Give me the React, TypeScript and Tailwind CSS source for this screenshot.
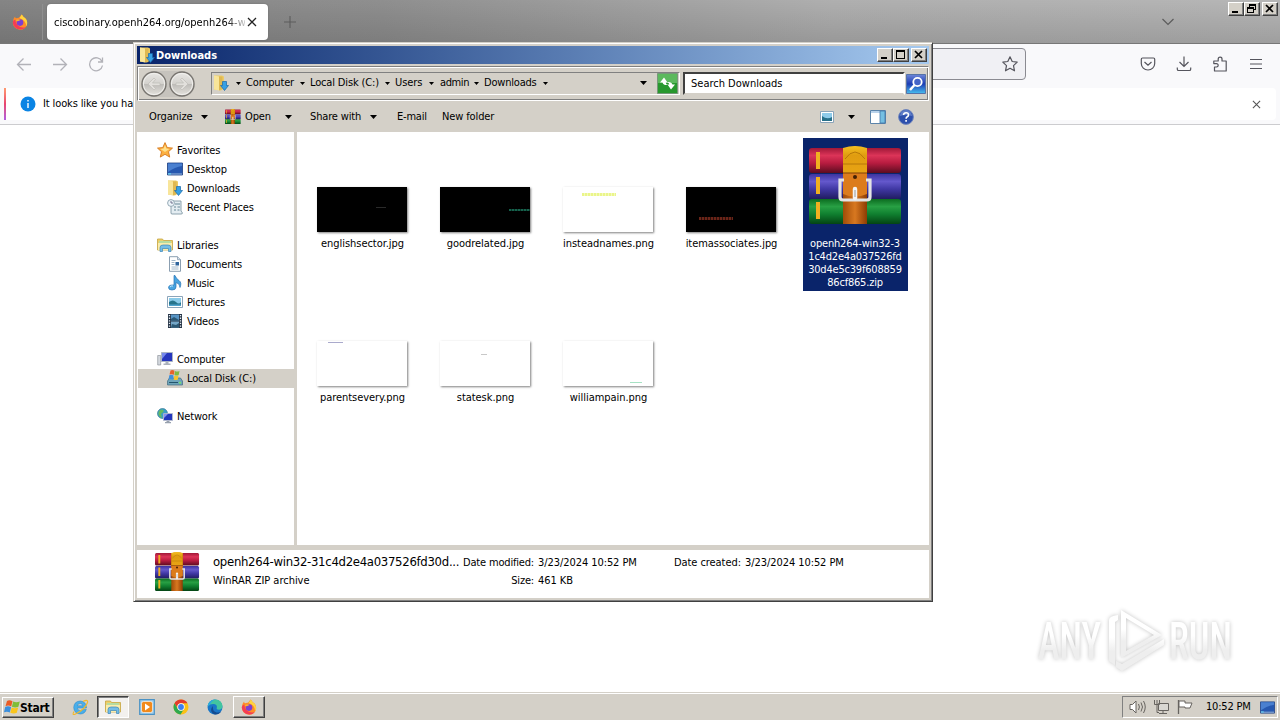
import type { ReactNode } from "react";

type IconProps = { className?: string };

function RarIcon({ className }: IconProps) {
  return (
    <svg viewBox="0 0 94 78" preserveAspectRatio="none" className={className}>
      <defs>
        <linearGradient id="rarRed" x1="0" y1="0" x2="0" y2="1">
          <stop offset="0" stopColor="#a01838" />
          <stop offset="0.3" stopColor="#dc3458" />
          <stop offset="0.6" stopColor="#b81c40" />
          <stop offset="1" stopColor="#5c0c20" />
        </linearGradient>
        <linearGradient id="rarBlue" x1="0" y1="0" x2="0" y2="1">
          <stop offset="0" stopColor="#3c34a0" />
          <stop offset="0.3" stopColor="#6458cc" />
          <stop offset="0.6" stopColor="#4038a4" />
          <stop offset="1" stopColor="#201c60" />
        </linearGradient>
        <linearGradient id="rarGreen" x1="0" y1="0" x2="0" y2="1">
          <stop offset="0" stopColor="#0c6c20" />
          <stop offset="0.3" stopColor="#28a044" />
          <stop offset="0.6" stopColor="#108030" />
          <stop offset="1" stopColor="#044414" />
        </linearGradient>
        <linearGradient id="rarGold" x1="0" y1="0" x2="0" y2="1">
          <stop offset="0" stopColor="#f4c020" />
          <stop offset="0.35" stopColor="#e09c10" />
          <stop offset="1" stopColor="#e8a414" />
        </linearGradient>
        <linearGradient id="rarStrap" x1="0" y1="0" x2="1" y2="0">
          <stop offset="0" stopColor="#a04c08" />
          <stop offset="0.5" stopColor="#d87820" />
          <stop offset="1" stopColor="#8c3c04" />
        </linearGradient>
      </defs>
      <rect x="0" y="2" width="92" height="25" rx="3" fill="url(#rarRed)" />
      <rect x="0" y="28" width="92" height="25" rx="3" fill="url(#rarBlue)" />
      <rect x="0" y="53" width="92" height="25" rx="3" fill="url(#rarGreen)" />
      <path d="M7 6h4v17H7zM7 31h4v17H7zM7 56h4v17H7z" fill="#f0b020" />
      <path d="M34 3q12-5 24 0v75H34z" fill="url(#rarStrap)" />
      <path d="M34 2q12-4 24 0v25H34z" fill="url(#rarGold)" />
      <path d="M36 13q10-14 20 0M34 18h24" fill="none" stroke="#b87808" />
      <path d="M34 27h24v21q-12 5-24 0z" fill="#dc7c1c" />
      <path d="M34 27h24" stroke="#804008" />
      <circle cx="46" cy="31" r="2" fill="#442004" />
      <path d="M35 34h-4v17q0 3 3 3h24q3 0 3-3V34h-4" fill="none" stroke="#e4e4e4" strokeWidth="3.200" />
      <path d="M46 43v9" stroke="#f4f4f4" strokeWidth="4.500" strokeLinecap="round" />
      <path d="M46 44v7" stroke="#999" strokeWidth="1" />
    </svg>
  );
}

function DownloadsIcon({ className }: IconProps) {
  return (
    <svg viewBox="0 0 16 16" className={className}>
      <path d="M1 .5h8l2 1v12l-3 2-7-1z" fill="#eccb66" />
      <path d="M1 .5l5 1v14l-5-1z" fill="#f8e59a" />
      <path d="M6 1.500h3.500v12.500l-3.500 1.500z" fill="#dfb851" />
      <path d="M9.500 6.500h4v4h2l-4 5-4-5h2z" fill="#36a0e4" stroke="#1767a9" strokeWidth=".7" />
    </svg>
  );
}

function LibrariesIcon({ className }: IconProps) {
  return (
    <svg viewBox="0 0 16 16" className={className}>
      <path d="M.5 2h5l1 1.500h9v9.500H.5z" fill="#edcf6b" stroke="#c5a440" strokeWidth=".8" />
      <path d="M2 4h12v2H2z" fill="#b7dca0" />
      <path d="M1 6h14v7H1z" fill="#faecac" />
      <path d="M3 14.500v-4q0-2.500 3-2.500h5q3 0 3 2.500v4h-2.500v-3h-6v3z" fill="#74bce6" stroke="#3c86b8" strokeWidth=".7" />
    </svg>
  );
}

function StarIcon({ className }: IconProps) {
  return (
    <svg viewBox="0 0 16 16" className={className}>
      <path d="M8 .6l2.200 5 5.300.5-4 3.600 1.200 5.400L8 12.300l-4.700 2.800 1.200-5.400-4-3.600 5.300-.5z" fill="#fcb040" stroke="#d6781c" strokeWidth=".9" />
      <path d="M8 3l1.400 3.600 3 .4-4.400 3-4.500-3 3.100-.4z" fill="#ffe08a" />
    </svg>
  );
}

function DesktopIcon({ className }: IconProps) {
  return (
    <svg viewBox="0 0 16 16" className={className}>
      <path d="M.5 2h15v12H.5z" fill="#2658b0" stroke="#1c3f80" strokeWidth=".8" />
      <path d="M1 2.500h14V5Q8 6 1 11z" fill="#4a80d0" />
      <path d="M1 12.500h14v1H1z" fill="#9db9dc" />
      <path d="M1 12h3v1.500H1z" fill="#5fc2e8" />
    </svg>
  );
}

function RecentIcon({ className }: IconProps) {
  return (
    <svg viewBox="0 0 16 16" className={className}>
      <path d="M4 2h10v10l1.500 2q0 1-1.500 1H5q-1.500 0-1-2z" fill="#e4edf2" stroke="#8299a5" strokeWidth=".9" />
      <path d="M8 5h5M7 8h2M10.500 8H13M7 11h2M10.500 11h2" stroke="#678797" />
      <circle cx="4" cy="4" r="3.400" fill="#edf5fa" stroke="#8aa0ad" strokeWidth=".9" />
      <path d="M4 2v2h2" fill="none" stroke="#557" strokeWidth=".8" />
    </svg>
  );
}

function DocumentIcon({ className }: IconProps) {
  return (
    <svg viewBox="0 0 16 16" className={className}>
      <path d="M2.500.7h8l3 3v11.600h-11z" fill="#fff" stroke="#7e94a8" strokeWidth=".9" />
      <path d="M10.500.7v3h3" fill="#d5e0ea" stroke="#7e94a8" strokeWidth=".7" />
      <path d="M4.500 4.500h4M4.500 6.500h3M4.500 8.500h3M4.500 11h7M4.500 13h7" stroke="#8aa4bd" strokeWidth=".8" />
      <path d="M8.500 6h3.500v3.500H8.500z" fill="#2e639c" />
    </svg>
  );
}

function MusicIcon({ className }: IconProps) {
  return (
    <svg viewBox="0 0 16 16" className={className}>
      <path d="M8 .5q1 3 4 5t1 7q0-4-4-5v4.500q0 3-4 3-3.500 0-3.500-2.500T6 10h1V.5z" fill="#48a4e0" stroke="#2673b4" strokeWidth=".7" />
      <path d="M3 12q1-1.500 3-1" stroke="#c1e8fb" fill="none" />
    </svg>
  );
}

function PictureIcon({ className }: IconProps) {
  return (
    <svg viewBox="0 0 16 16" className={className}>
      <path d="M.5 2.500h15v11H.5z" fill="#fff" stroke="#7f9bb2" strokeWidth=".9" />
      <path d="M2 4h12v8H2z" fill="#8bcbe9" />
      <path d="M2 8q4-3 7 0t5 0v4H2z" fill="#27748b" />
      <path d="M2 10.500h12V12H2z" fill="#4fa3cd" />
    </svg>
  );
}

function VideoIcon({ className }: IconProps) {
  return (
    <svg viewBox="0 0 16 16" className={className}>
      <path d="M1 1h14v14H1z" fill="#273547" />
      <path d="M4 1.500h8v6H4z" fill="#5794c4" />
      <path d="M4 8.500h8v6H4z" fill="#74a6c7" />
      <path d="M4 6l3-2 5 3v.5H4zM5 11l4 1 3-2v4.500H4z" fill="#2b5874" />
      <path d="M2.500 2v12M13.500 2v12" stroke="#e5edf4" strokeWidth="1.300" strokeDasharray="1.300 1.300" />
    </svg>
  );
}

function ComputerIcon({ className }: IconProps) {
  return (
    <svg viewBox="0 0 16 16" className={className}>
      <path d="M.7 4.500h3v9.500h-3z" fill="#d4d8de" stroke="#82888f" strokeWidth=".6" />
      <path d="M4.500 1.500h11v9h-11z" fill="#2636bd" stroke="#aab4c4" />
      <path d="M5 2h5l-5 6z" fill="#7588ec" />
      <path d="M8.500 11h3v1.500h2V14h-7v-1.500h2z" fill="#aab1bb" />
    </svg>
  );
}

function WindowsFlag({ className }: IconProps) {
  return (
    <svg viewBox="0 0 16 16" className={className}>
      <path d="M3 2Q5.500.5 8.500 2.300L7.200 7.500Q4.500 5.800 1.500 7.200z" fill="#ea5b25" />
      <path d="M9.200 2.600q3 1.500 6.600 0l-1.400 5.200q-3 1.500-6.500 0z" fill="#7fbd38" />
      <path d="M1.200 8q3-1.500 5.900.2l-1.300 5.300Q3 11.900 0 13.300z" fill="#3b8fdd" />
      <path d="M7.700 8.600q3 1.500 6.500 0l-1.400 5.200q-3 1.500-6.500 0z" fill="#f9c51d" />
    </svg>
  );
}

function DiskIcon({ className }: IconProps) {
  return (
    <svg viewBox="0 0 16 16" className={className}>
      <path d="M.5 11l2-3h11l2 3v4H.5z" fill="#6fa5ba" stroke="#3f6a80" strokeWidth=".7" />
      <path d="M2 12.500h9" stroke="#24556c" />
      <path d="M12 12h2v1.500h-2z" fill="#75ec63" />
      <path d="M3.500.5q2-1 4 .3l-.6 4q-2-1.200-4.400-.2z" fill="#e8622c" />
      <path d="M8 1q2 1 4.500 0l-.8 4q-2 1-4.300 0z" fill="#80ba40" />
      <path d="M2.300 5.200q2-.8 4.300.2L6 9.400q-2-1-4.400 0z" fill="#4190d9" />
      <path d="M7.300 5.600q2 1 4.200 0l-.6 4q-2 1-4.200 0z" fill="#f6c42e" />
    </svg>
  );
}

function NetworkIcon({ className }: IconProps) {
  return (
    <svg viewBox="0 0 16 16" className={className}>
      <circle cx="5.500" cy="5.500" r="5" fill="#3b9fc5" stroke="#276d8c" strokeWidth=".6" />
      <path d="M2 3q3-3 5 0L4 6l1 4Q1 8 1.500 5z" fill="#67bb61" />
      <path d="M6.500 5.500h9v7h-9z" fill="#2437bd" stroke="#b5bccd" strokeWidth=".9" />
      <path d="M7 6h4l-4 4z" fill="#8291f0" />
      <path d="M9.500 13h3v1h1.500v1.300H8V14h1.500z" fill="#98a1ae" />
    </svg>
  );
}

function FirefoxIcon({ className }: IconProps) {
  return (
    <svg viewBox="0 0 16 16" className={className}>
      <path d="M9.500.5q1.600 1.200 2 2.600 3.700 2 3.700 5.900a7.200 7 0 0 1-14.400-.5Q.8 5 3 2.500q0 1.300 1 1.800 1.600-.8 3-.5Q8.500 2 9.500.5z" fill="#ff8a28" />
      <path d="M9.500.5q1.600 1.200 2 2.600 3.700 2 3.700 5.900-.2 2-1.200 3.500.5-6-6.500-8.500Q9 2.300 9.500.5z" fill="#ffd33d" />
      <path d="M.8 8Q1 13 5.500 15q6 1.500 8.500-2-5 1.600-8-1.400T3.500 5.500Q1.500 5.500.8 8z" fill="#f53c55" />
      <circle cx="8" cy="8.600" r="3.300" fill="#7b3fd2" />
      <path d="M4 6q2.500-1.700 4.500 0-2 1.500-4 1z" fill="#ffb02e" />
    </svg>
  );
}

function ChromeIcon({ className }: IconProps) {
  return (
    <svg viewBox="0 0 16 16" className={className}>
      <circle cx="8" cy="8" r="7.500" fill="#fbc116" />
      <path d="M1.500 4.250A7.500 7.500 0 0 1 14.500 4.250H8A3.750 3.750 0 0 0 4.500 9z" fill="#e33b2e" />
      <path d="M1.500 4.250A7.500 7.500 0 0 0 7.500 15.480L11 10A3.750 3.750 0 0 1 4.700 9.800z" fill="#2da94f" />
      <circle cx="8" cy="8" r="3.700" fill="#fff" />
      <circle cx="8" cy="8" r="2.900" fill="#3d7ff0" />
    </svg>
  );
}

function EdgeIcon({ className }: IconProps) {
  return (
    <svg viewBox="0 0 16 16" className={className}>
      <circle cx="8" cy="8" r="7.500" fill="#1976c8" />
      <path d="M.6 7Q2 .5 8.300.5q6.500.3 7.200 6.500-.2 3.500-3.500 3.700-3 0-2.200-1.700Q10.500 5.500 7 5q-4-.3-6.400 2z" fill="#42c5a0" />
      <path d="M.6 7Q2 .5 8.300.5 4 2 3 6z" fill="#2ba8e0" />
      <path d="M6 7q-1 5 3.500 6.500 3 .5 4.700-1.300Q12 16 7 15.300 3 13 4.500 9z" fill="#134b91" />
    </svg>
  );
}

function IeIcon({ className }: IconProps) {
  return (
    <svg viewBox="0 0 18 18" className={className}>
      <path d="M15.500 10H6.300q.4 2.600 3.200 2.600 1.700 0 2.500-1.200h3.300Q13.800 16 9.300 16q-6.300-.4-6.600-6.500Q3 3.300 9.300 3q6 .4 6.200 7zM6.300 7.800h5.500Q11.500 5.600 9.200 5.500 6.800 5.600 6.300 7.800z" fill="#49aeea" stroke="#2583c5" strokeWidth=".5" />
      <path d="M3 13.500Q.5 17.800 4.500 16 14 11.500 16.500 4.500q.8-3.500-4.500-1" fill="none" stroke="#f1b82b" strokeWidth="1.200" />
    </svg>
  );
}

function PlayerIcon({ className }: IconProps) {
  return (
    <svg viewBox="0 0 16 16" className={className}>
      <path d="M.7.7h14.600v14.600H.7z" fill="#a5d1ee" stroke="#4b92c4" strokeWidth="1.200" />
      <rect x="2.500" y="2.500" width="11" height="11" rx="2" fill="#f18a1c" stroke="#fff" strokeWidth=".6" />
      <path d="M6 4.500l5 3.500-5 3.500z" fill="#fff" />
    </svg>
  );
}

function Caret({ className = "w-[5px] h-[3px]" }: IconProps) {
  return (
    <svg viewBox="0 0 8 4" preserveAspectRatio="none" className={className}>
      <path d="M0 0h8L4 4z" fill="#000" />
    </svg>
  );
}

function CaptionButton({ kind }: { kind: "min" | "max" | "restore" | "close" }) {
  return (
    <span className="flex h-[14px] w-4 items-center justify-center border border-t-white border-l-white border-r-[#404040] border-b-[#404040] bg-[#d4d0c8] shadow-[inset_-1px_-1px_#808080]">
      <svg viewBox="0 0 12 10" className="h-[10px] w-3" shapeRendering={kind === "close" ? "auto" : "crispEdges"}>
        {kind === "min" && <path d="M2 7h6v2H2z" />}
        {kind === "max" && <path d="M1 0h9v9H1zM2 2v6h7V2z" fillRule="evenodd" />}
        {kind === "restore" && <path d="M3 0h7v6H8v3H1V3h2zM4 2v1h4v2h1V2zM2 5v3h5V5z" fillRule="evenodd" />}
        {kind === "close" && <path d="M2 1l7 7M9 1L2 8" stroke="#000" strokeWidth="1.700" />}
      </svg>
    </span>
  );
}

function NavButton({ flip }: { flip?: boolean }) {
  return (
    <svg viewBox="0 0 26 26" className={flip ? "h-[26px] w-[26px] -scale-x-100" : "h-[26px] w-[26px]"}>
      <defs>
        <linearGradient id="navFace" x1="0" y1="0" x2="0" y2="1">
          <stop offset="0" stopColor="#e9e8e5" />
          <stop offset="0.48" stopColor="#d4d2ce" />
          <stop offset="0.5" stopColor="#bdbbb7" />
          <stop offset="1" stopColor="#e6e4df" />
        </linearGradient>
      </defs>
      <circle cx="13" cy="13" r="12" fill="url(#navFace)" stroke="#77746f" strokeWidth="1.300" />
      <circle cx="13" cy="13" r="10.600" fill="none" stroke="#f1f0ed" strokeWidth="1" />
      <path d="M7 13l6-6 1.500 1.500L11.500 12H19v2.500h-7.500l3 3L13 19z" fill="#e2e0dc" stroke="#bbb8b4" strokeWidth=".6" />
    </svg>
  );
}

function FirefoxWindow() {
  return (
    <div className="flex h-[692px] w-full flex-col bg-white">
      <div className="relative flex h-11 items-start border-b border-[#777] bg-[linear-gradient(to_bottom,transparent,rgba(0,0,0,0.13)),linear-gradient(to_right,#858585,#8f8f8f_30%,#afafaf_65%,#b6b6b6)]">
        <FirefoxIcon className="mt-[14px] ml-3 h-4 w-4" />
        <div className="ml-[14px] mt-1 h-9 w-px bg-[#8f8f8f]" />
        <div className="mt-1 ml-1 flex h-9 w-[221px] items-center rounded bg-white pl-[7px] shadow-[0_0_2px_#666]">
          <span className="w-[191px] pt-0.5 [mask-image:linear-gradient(to_right,#000_172px,transparent_196px)]">
            ciscobinary.openh264.org/openh264-w
          </span>
          <svg viewBox="0 0 10 10" className="ml-[2px] h-[10px] w-[10px]">
            <path d="M1 1l8 8M9 1L1 9" stroke="#222" strokeWidth="1.300" />
          </svg>
        </div>
        <svg viewBox="0 0 12 12" className="mt-4 ml-4 h-3 w-3">
          <path d="M6 0v12M0 6h12" stroke="#5c5c5c" strokeWidth="1.100" />
        </svg>
        <svg viewBox="0 0 12 8" className="mt-[18px] mr-[54px] ml-auto h-2 w-3">
          <path d="M.5 1L6 6.500 11.500 1" fill="none" stroke="#5c5c5c" strokeWidth="1.200" />
        </svg>
        <div className="mt-0.5 mr-[2px] flex">
          <CaptionButton kind="min" />
          <CaptionButton kind="restore" />
          <span className="w-0.5" />
          <CaptionButton kind="close" />
        </div>
      </div>

      <div className="flex h-11 shrink-0 items-center bg-[#f9f9fb] pb-1 pl-4">
        <svg viewBox="0 0 88 16" className="h-4 w-[88px]" fill="none" stroke="#b2b2b8" strokeWidth="1.300">
          <path d="M15 8.500H1.500M7.500 2.500L1.500 8.500 7.500 14.500M37 8.500h13.500M44.500 2.500L50.500 8.500 44.500 14.500" />
          <path d="M86 5.500A6.500 6.500 0 1 0 86.500 9.500M86.500 1.500v4.500H82" />
        </svg>
        <div className="ml-10 flex h-8 w-[882px] items-center justify-end rounded border border-[#8a8a91] bg-[#f0f0f4] pr-[7px]">
          <svg viewBox="0 0 16 16" className="h-4 w-4" fill="none" stroke="#55555d" strokeWidth="1.200" strokeLinejoin="round">
            <path d="M8 .8l2.200 4.700 5 .6-3.700 3.500 1 5.200L8 12.300l-4.500 2.500 1-5.200L.8 6.100l5-.6z" />
          </svg>
        </div>
        <div className="ml-[114px] flex gap-5">
          <svg viewBox="0 0 16 16" className="h-4 w-4" fill="none" stroke="#55555d" strokeWidth="1.200">
            <path d="M2.500 2h11q1.200 0 1.200 1.200V7.500A6.700 6.500 0 0 1 1.300 7.500V3.200q0-1.200 1.200-1.200zM4.500 6L8 9.300l3.500-3.300" />
          </svg>
          <svg viewBox="0 0 16 16" className="h-4 w-4" fill="none" stroke="#55555d" strokeWidth="1.200">
            <path d="M8 .5v10M3.500 6L8 10.500 12.500 6M1.300 11.500v1.700q0 1.300 1.300 1.300h10.800q1.300 0 1.300-1.300v-1.700" />
          </svg>
          <svg viewBox="0 0 16 16" className="h-4 w-4" fill="none" stroke="#55555d" strokeWidth="1.200" strokeLinejoin="round">
            <path d="M2.500 15V11h2a1.700 1.700 0 0 0 0-3.400H1.800V5h4.400V3a1.900 1.900 0 0 1 3.800 0v2h4.200v10z" />
          </svg>
          <svg viewBox="0 0 16 16" className="h-4 w-4" stroke="#55555d" strokeWidth="1.200">
            <path d="M2 3.500h12M2 8h12M2 12.500h12" />
          </svg>
        </div>
      </div>

      <div className="flex h-[37px] shrink-0 border-b border-[#cccccf] bg-[#f9f9fb] pr-1 pb-1 pl-1">
        <div className="w-[2px] bg-linear-to-b from-[#ff9a70] via-[#e8436e] to-[#b05ae0]" />
        <div className="flex flex-1 items-center rounded-r bg-white pl-[14px]">
          <svg viewBox="0 0 16 16" className="h-4 w-4">
            <circle cx="8" cy="8" r="7.500" fill="#0a84e4" />
            <path d="M8 7v5M8 4v1.500" stroke="#fff" strokeWidth="1.400" />
          </svg>
          <span className="ml-[7px] tracking-[-0.12px]">It looks like you ha</span>
          <svg viewBox="0 0 10 10" className="mr-[15px] ml-auto h-[9px] w-[9px]">
            <path d="M1 1l8 8M9 1L1 9" stroke="#555" strokeWidth="1.200" />
          </svg>
        </div>
      </div>
    </div>
  );
}

function Crumb({ children, className }: { children: ReactNode; className: string }) {
  return (
    <span className={`flex items-center justify-between ${className}`}>
      {children}
      <Caret />
    </span>
  );
}

function AddressBar() {
  return (
    <div className="flex h-[35px] shrink-0 items-center border border-[#808080] border-r-white border-b-white pl-[3px] shadow-[inset_1px_1px_#fff,inset_-1px_-1px_#808080]">
      <div className="flex h-[26px] items-center gap-0.5 rounded-full bg-[#c6c3bd]">
        <NavButton />
        <NavButton flip />
      </div>
      <div className="ml-4 flex h-[23px] w-[469px] items-center border border-[#808080] border-r-white border-b-white pb-px pl-px">
        <DownloadsIcon className="h-4 w-4" />
        <Caret className="ml-[7px] h-[3px] w-[5px]" />
        <Crumb className="ml-[5px] w-[59px] tracking-[-0.15px]">Computer</Crumb>
        <Crumb className="ml-[5px] w-20 tracking-[-0.15px]">Local Disk (C:)</Crumb>
        <Crumb className="ml-[5px] w-[39px] tracking-[-0.1px]">Users</Crumb>
        <Crumb className="ml-[6px] w-[39px] tracking-[-0.4px]">admin</Crumb>
        <Crumb className="ml-[5px] w-[64px] tracking-[-0.2px]">Downloads</Crumb>
        <Caret className="ml-auto h-1 w-[7px]" />
        <svg viewBox="0 0 21 21" className="mr-px ml-[10px] h-[21px] w-[21px]">
          <path d="M.5.500h20v20H.5z" fill="#28982e" stroke="#77977a" />
          <path d="M1 1h19v9H1z" fill="#5cb95d" />
          <path d="M3 9.500l4-5 3.500 5H8.700q.3 2 2.300 2.500-4.500.6-5.500-2.500zM18 11.500L14 16.500l-3.500-5h1.800Q12 9.500 10 9q4.500-.6 5.500 2.500z" fill="#fff" />
        </svg>
      </div>
      <div className="ml-[3px] flex h-[23px] w-[222px] items-center border-2 border-[#404040] border-r-white border-b-[#d4d0c8] bg-white pl-[6px]">
        Search Downloads
      </div>
      <svg viewBox="0 0 20 20" className="ml-px h-5 w-5">
        <defs>
          <linearGradient id="searchFace" x1="0" y1="0" x2="0" y2="1">
            <stop offset="0" stopColor="#6d86d8" />
            <stop offset="0.5" stopColor="#1c3cb4" />
            <stop offset="1" stopColor="#48c0f0" />
          </linearGradient>
        </defs>
        <path d="M.5.500h19v19H.5z" fill="url(#searchFace)" stroke="#5673a8" />
        <circle cx="11.500" cy="8" r="4.200" fill="#4464c8" stroke="#fff" strokeWidth="1.800" />
        <path d="M8.500 11L4 16" stroke="#fff" strokeWidth="2.500" />
      </svg>
    </div>
  );
}

function CommandBar() {
  return (
    <div className="flex h-[31px] shrink-0 items-center pl-3">
      <span className="w-[45px] tracking-[-0.1px]">Organize</span>
      <Caret className="ml-[7px] h-1 w-[7px]" />
      <RarIcon className="ml-[17px] h-[15px] w-4" />
      <span className="ml-1 w-[39px] tracking-[-0.1px]">Open</span>
      <Caret className="ml-px h-1 w-[7px]" />
      <span className="ml-[18px] w-[52px] tracking-[-0.15px]">Share with</span>
      <Caret className="ml-2 h-1 w-[7px]" />
      <span className="ml-5 w-[45px] tracking-[-0.2px]">E-mail</span>
      <span className="tracking-[-0.12px]">New folder</span>
      <svg viewBox="0 0 14 12" className="ml-auto h-3 w-[14px]">
        <path d="M.5.500h13v11H.5z" fill="#fff" stroke="#8ba4b9" />
        <path d="M2 2h10v8H2z" fill="#8ecbea" />
        <path d="M2 5q5 4 10 1v4H2z" fill="#27708a" />
      </svg>
      <Caret className="ml-[14px] h-1 w-[7px]" />
      <svg viewBox="0 0 16 14" className="ml-[15px] h-[14px] w-4">
        <path d="M.5.500h15v13H.5z" fill="#fff" stroke="#5c84aa" />
        <path d="M1 1h14v2H1z" fill="#b9d2ea" />
        <path d="M10 1h5v12h-5z" fill="#75bfe2" stroke="#4277a8" strokeWidth=".8" />
      </svg>
      <svg viewBox="0 0 16 16" className="mr-[15px] ml-3 h-4 w-4">
        <circle cx="8" cy="8" r="7.400" fill="#2c4fac" stroke="#7187bd" />
        <path d="M2 7a6 6 0 0 1 12 0q-6-2-12 0z" fill="#5f7dc8" />
        <path d="M5.500 6q.2-2.300 2.600-2.300T10.500 6q0 1.200-1.200 1.800T8.100 9.700M8.100 11v1.800" fill="none" stroke="#fff" strokeWidth="1.600" />
      </svg>
    </div>
  );
}

type TreeItem = { label: string; icon: (p: IconProps) => ReactNode; root?: boolean; selected?: boolean };

const tree: TreeItem[][] = [
  [
    { label: "Favorites", icon: StarIcon, root: true },
    { label: "Desktop", icon: DesktopIcon },
    { label: "Downloads", icon: DownloadsIcon },
    { label: "Recent Places", icon: RecentIcon },
  ],
  [
    { label: "Libraries", icon: LibrariesIcon, root: true },
    { label: "Documents", icon: DocumentIcon },
    { label: "Music", icon: MusicIcon },
    { label: "Pictures", icon: PictureIcon },
    { label: "Videos", icon: VideoIcon },
  ],
  [
    { label: "Computer", icon: ComputerIcon, root: true },
    { label: "Local Disk (C:)", icon: DiskIcon, selected: true },
  ],
  [{ label: "Network", icon: NetworkIcon, root: true }],
];

function TreePane() {
  return (
    <div className="flex w-[157px] flex-col gap-[19px] pt-[9px] pl-px">
      {tree.map((group) => (
        <div key={group[0].label}>
          {group.map(({ label, icon: Icon, root, selected }) => (
            <div
              key={label}
              className={`flex h-[19px] items-start gap-1 pt-px tracking-[-0.15px] ${root ? "pl-[19px]" : "pl-[29px]"} ${selected ? "bg-[#d4d0c8]" : ""}`}
            >
              <Icon className="h-4 w-4 shrink-0" />
              <span className="pt-0.5">{label}</span>
            </div>
          ))}
        </div>
      ))}
    </div>
  );
}

const files = [
  { name: "englishsector.jpg", face: "bg-black", mark: "mt-5 ml-[59px] h-px w-[10px] bg-[#2a2a2a]" },
  { name: "goodrelated.jpg", face: "bg-black", mark: "mt-[22px] ml-[69px] h-[2px] w-[21px] bg-[repeating-linear-gradient(to_right,#16624d_0_2px,#0c3529_2px_3px)]" },
  { name: "insteadnames.png", face: "bg-white", mark: "mt-[6px] ml-[19px] h-[3px] w-[34px] bg-[repeating-linear-gradient(to_right,#eaf58a_0_2px,#f4fabd_2px_3px)]" },
  { name: "itemassociates.jpg", face: "bg-black", mark: "mt-[30px] ml-[13px] h-[3px] w-[34px] bg-[repeating-linear-gradient(to_right,#6a2418_0_2px,#2c100a_2px_3px)]" },
  { name: "openh264-win32-31c4d2e4a037526fd30d4e5c39f60885986cf865.zip", selected: true },
  { name: "parentsevery.png", face: "bg-white", mark: "mt-px ml-[11px] h-px w-[15px] bg-[#aaaacc]" },
  { name: "statesk.png", face: "bg-white", mark: "mt-[13px] ml-[41px] h-px w-[6px] bg-[#c8c8c8]" },
  { name: "williampain.png", face: "bg-white", mark: "mt-[41px] ml-[67px] h-px w-3 bg-[#a7e2c4]" },
];

const zipLines = ["openh264-win32-3", "1c4d2e4a037526fd", "30d4e5c39f608859", "86cf865.zip"];

function FileGrid() {
  return (
    <div className="grid flex-1 auto-rows-[153px] grid-cols-[repeat(5,105px)] content-start gap-x-[18px] gap-y-px pt-[6px] pl-[14px]">
      {files.map((file) =>
        file.selected ? (
          <div key={file.name} className="flex flex-col items-center bg-[#0a246a] text-white">
            <RarIcon className="mt-2 h-[78px] w-[94px]" />
            <div className="mt-[13px] mr-px text-center leading-[13px] tracking-[-0.2px]">
              {zipLines.map((line) => (
                <div key={line}>{line}</div>
              ))}
            </div>
          </div>
        ) : (
          <div key={file.name} className="flex flex-col items-center">
            <div className={`mt-[49px] mr-[3px] flex h-[45px] w-[90px] items-start shadow-[1px_1px_2px_rgba(0,0,0,0.5)] ${file.face}`}>
              <div className={file.mark} />
            </div>
            <span className="mt-[5px] mr-0.5 leading-[13px] tracking-[-0.05px]">{file.name}</span>
          </div>
        )
      )}
    </div>
  );
}

function DetailsPane() {
  return (
    <div className="flex h-12 shrink-0 bg-white pl-[18px]">
      <RarIcon className="mt-0.5 h-[39px] w-[45px]" />
      <div className="ml-[13px] w-[244px] whitespace-nowrap pt-1 leading-[18px]">
        <div className="h-[18px] text-[13px] leading-4 tracking-[-0.3px]">openh264-win32-31c4d2e4a037526fd30d...</div>
        <div className="tracking-[-0.02px]">WinRAR ZIP archive</div>
      </div>
      <div className="ml-[4px] w-[73px] whitespace-nowrap pt-1 text-right leading-[18px] tracking-[-0.18px]">
        <div>Date modified:</div>
        <div>Size:</div>
      </div>
      <div className="ml-1 w-[132px] whitespace-nowrap pt-1 leading-[18px] tracking-[-0.07px]">
        <div>3/23/2024 10:52 PM</div>
        <div>461 KB</div>
      </div>
      <div className="w-[71px] pl-1 whitespace-nowrap pt-1 leading-[18px] tracking-[-0.07px]">Date created:</div>
      <div className="ml-1 whitespace-nowrap pt-1 leading-[18px] tracking-[-0.07px]">3/23/2024 10:52 PM</div>
    </div>
  );
}

function ExplorerWindow() {
  return (
    <div className="absolute top-[42px] left-[133px] flex h-[560px] w-[800px] flex-col border border-[#d4d0c8] border-r-[#404040] border-b-[#404040] bg-[#d4d0c8] p-[3px] shadow-[inset_1px_1px_#fff,inset_-1px_-1px_#808080]">
      <div className="flex h-[18px] shrink-0 items-center bg-linear-to-r from-[#0a246a] to-[#a6caf0] pr-0.5 pl-0.5 text-white">
        <DownloadsIcon className="h-4 w-4" />
        <span className="ml-px pt-px font-bold">Downloads</span>
        <div className="ml-auto flex text-black">
          <CaptionButton kind="min" />
          <CaptionButton kind="max" />
          <span className="w-0.5" />
          <CaptionButton kind="close" />
        </div>
      </div>
      <div className="h-0.5 shrink-0" />
      <AddressBar />
      <CommandBar />
      <div className="flex h-[413px] shrink-0 bg-white">
        <TreePane />
        <div className="w-[3px] bg-[#d4d0c8]" />
        <FileGrid />
      </div>
      <div className="h-[5px] shrink-0" />
      <DetailsPane />
    </div>
  );
}

function Watermark() {
  return (
    <svg viewBox="0 0 220 84" className="absolute top-[597px] left-[1025px] h-[84px] w-[220px] drop-shadow-[0_0_2px_rgba(0,0,0,0.24)]">
      <defs>
        <linearGradient id="mark" x1="0" y1="0" x2="0" y2="1">
          <stop offset="0.4" stopColor="#ffffff" />
          <stop offset="0.65" stopColor="#eeeeee" />
        </linearGradient>
      </defs>
      <g fill="url(#mark)" fontFamily="Roboto, sans-serif" fontWeight="500" fontSize="51">
        <text x="13" y="62" textLength="63" lengthAdjust="spacingAndGlyphs">ANY</text>
        <text x="144" y="62" textLength="63" lengthAdjust="spacingAndGlyphs">RUN</text>
      </g>
      <path d="M96 13v48l41-23zM101 21l28 17-28 16z" fill="url(#mark)" fillRule="evenodd" />
      <path d="M93 18q-9 1-9 5v41l6 4V25l3-2zM139 42L97 67l-6-3v6l6 4 42-26z" fill="url(#mark)" />
    </svg>
  );
}

function Taskbar() {
  return (
    <div className="flex h-7 items-center border-t border-[#d4d0c8] bg-[#d4d0c8] pt-px shadow-[inset_0_1px_#fff]">
      <div className="ml-[2px] flex h-[21px] w-[52px] items-center border border-white border-r-[#404040] border-b-[#404040] pl-px font-bold shadow-[inset_-1px_-1px_#808080]">
        <WindowsFlag className="h-4 w-4" />
        <span className="pt-px text-[12px] tracking-[-0.25px]">Start</span>
      </div>
      <IeIcon className="ml-[17px] h-[18px] w-[18px]" />
      <div className="ml-2 flex h-[22px] w-8 items-center justify-center border border-[#404040] border-r-white border-b-white bg-[#f3f1ee] shadow-[inset_1px_1px_#808080]">
        <LibrariesIcon className="h-4 w-4" />
      </div>
      <PlayerIcon className="ml-[10px] h-4 w-4" />
      <ChromeIcon className="ml-[18px] h-4 w-4" />
      <EdgeIcon className="ml-[18px] h-4 w-4" />
      <div className="ml-[10px] flex h-[22px] w-8 items-center justify-center border border-white border-r-[#404040] border-b-[#404040] shadow-[inset_-1px_-1px_#808080]">
        <FirefoxIcon className="h-4 w-4" />
      </div>
      <div className="mr-[2px] ml-auto flex h-[22px] w-[156px] items-center border border-[#808080] border-r-white border-b-white pl-[6px]">
        <svg viewBox="0 0 64 16" className="h-4 w-16" fill="#fff" stroke="#66635f">
          <path d="M1 5.500h2.500L7 2v12l-3.500-3.500H1z" />
          <path d="M9.500 5q1.800 3 0 6M12 3.500q3 4.500 0 9M14.500 2q3.500 6 0 12" fill="none" />
          <path d="M29.500 4.500h10v7h-10z" fill="#d9d7d2" />
          <path d="M30 14.500h8M34 11.500v3M25.500 1v4.500h5V1M28 1v4.500M28 5.500v8h2" fill="none" />
          <path d="M49.500 1v14" strokeWidth="1.300" />
          <path d="M50 2h6v2h7l-2 5h-5V8h-6z" />
        </svg>
        <span className="ml-[13px] w-[45px] whitespace-nowrap tracking-[-0.2px]">10:52 PM</span>
        <DesktopIcon className="ml-[9px] h-[15px] w-[15px]" />
      </div>
    </div>
  );
}

export default function App() {
  return (
    <div className="relative h-[720px] w-[1280px] overflow-hidden whitespace-nowrap bg-white font-['DejaVu_Sans_Condensed','DejaVu_Sans',sans-serif] text-[11px] leading-[14px] text-black font-stretch-condensed">
      <FirefoxWindow />
      <Taskbar />
      <ExplorerWindow />
      <Watermark />
    </div>
  );
}
